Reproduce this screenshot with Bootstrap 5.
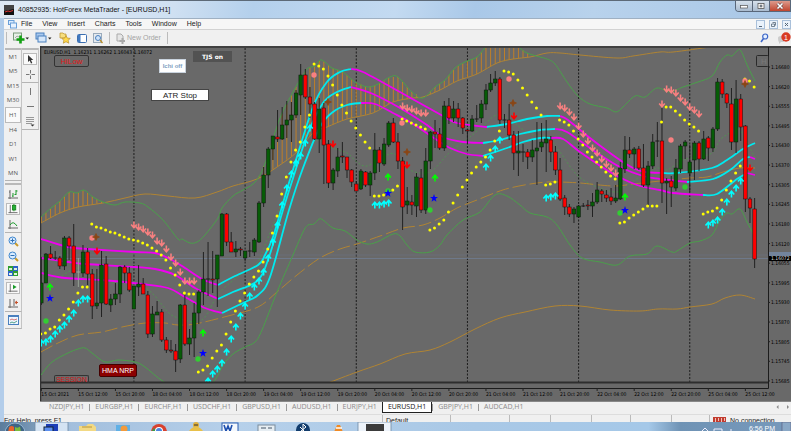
<!DOCTYPE html>
<html lang="en">
<head>
<meta charset="utf-8">
<meta name="viewport" content="width=device-width, initial-scale=1">
<title>40852935: HotForex MetaTrader - [EURUSD,H1]</title>
<link href="https://cdn.jsdelivr.net/npm/bootstrap@5.3.0/dist/css/bootstrap.min.css" rel="stylesheet">
<style>
body{background:#fff;font:7px/10px "Liberation Sans",Arial,sans-serif;color:#222;overflow:hidden}
button{font:inherit;color:inherit;background:none;border:0;padding:0}
svg{display:block}
.app{margin-right:9px}
.titlebar{height:18px;border-top:1px solid #5d6a78;background:linear-gradient(100deg,#dfeaf5 0,#cfe0f2 22%,#b4d0ec 32%,#c3daf1 50%,#a9c8e8 60%,#b8d2ec 75%,#a8c6e6 100%)}
.titlebar .caption{color:#111}
.wbtns{height:11px;border:1px solid #59677a;border-top:0;border-radius:0 0 0 4px;overflow:hidden}
.wbtns button{width:17px;border-right:1px solid #59677a;background:linear-gradient(#d6e1ec,#a9bbcf)}
.wbtns button:last-child{width:20px;border:0;background:linear-gradient(#dd9a8c,#c0452f)}
.frame{border-left:4px solid #b3cdea}
.menubar{height:11px;background:#f6f6f6;border-top:1px solid #9fb0c2}
.menubar a{color:#222;text-decoration:none}
.menus{gap:10px}
.menubar .mdi button{width:9px;height:9px;border:1px solid #a9c0da;background:#eaf2fb}
.toolrow{height:17px;background:#f0f0f0;border-top:1px solid #d2d2d2}
.toolset{gap:6px;padding-left:2px}
.toolrow .order{color:#a3a3a3;gap:2px}
.grip{height:2px;border-top:1px solid #b9b9b9;border-bottom:1px solid #b9b9b9}
.vgrip{width:1px;height:12px;background:#bbb}
.side{background:#f0f0f0;padding:2px 1px 0 1px}
.col-a{width:17px}
.col-b{width:17px}
.tframes{height:130px;color:#555;font-family:"Open Sans",sans-serif;font-size:6px}
.pressed{background:#fafafa;border:1px solid #bbb!important}
.edge{border-right:1px solid #c4c4c4;border-bottom:1px solid #b4b4b4}
.tgroup{padding:2px 0;gap:3px}
.tgroup button{width:14px;height:12px}
.tgroup svg{margin:auto}
.plot button{position:absolute;line-height:1;white-space:nowrap;overflow:hidden}
.b-hilow{left:14px;top:9px;width:35px;height:12px;border:1px solid #333!important;border-radius:2px;color:#e01818!important;font:8px "Liberation Sans",sans-serif!important}
.b-session{left:14px;top:329px;width:35px;height:8px;border:1px solid #333!important;border-bottom:0!important;border-radius:2px 2px 0 0;color:#d01818!important;font:7px "Liberation Sans",sans-serif!important}
.b-ichi{left:119px;top:13px;width:27px;height:14px;background:#fff!important;border:1px solid #c9d3de!important;color:#7f9fc2!important;font:bold 6px "Liberation Sans",sans-serif!important}
.b-tjs{left:153px;top:5px;width:39px;height:11px;background:#525252!important;color:#fff!important;font:bold 6px "DejaVu Sans",sans-serif!important}
.b-atr{left:111px;top:43px;width:58px;height:12px;background:#fff!important;border:1px solid #444!important;color:#222!important;font:8px "Liberation Sans",sans-serif!important}
.b-hma{left:59px;top:318px;width:38px;height:13px;background:#8b0000!important;border:1px solid #400!important;border-radius:2px;color:#fff!important;font:7px "Liberation Sans",sans-serif!important}
.axis{font:5px "DejaVu Sans Condensed","Open Sans",sans-serif;fill:#000}
.tabs{height:13px;background:#f0f0f0;border-top:1px solid #888;padding-left:3px;font-family:"Open Sans",sans-serif}
.tabs a{color:#8a8a8a;text-decoration:none;padding:0 5px 0 6px;line-height:10px;position:relative}
.tabs a+a:not(.on)::before{content:"";position:absolute;left:0;top:2px;height:7px;border-left:1px solid #999}
.tabs a.on{background:#fff;color:#111;border:1px solid #222;border-top:0;padding:0 5px}
.statusbar{height:8px;background:#f0f0f0;border-top:1px solid #ddd;overflow:hidden;line-height:11px}
.statusbar .cell{border-left:1px solid #bbb;height:8px;padding-left:3px;white-space:nowrap}
.taskbar{height:9px;overflow:hidden;background:linear-gradient(90deg,#5b7c9c 0,#6f8fae 3%,#a3bfdd 9%,#b6d0ea 30%,#a9c8e6 60%,#a5c8e8 82%,#6f93b5 86%,#7799bb 100%)}
.taskbar svg{width:100%;height:9px}
.taskbar .clock{color:#fff;line-height:13px}
</style>
</head>
<body>
<div class="app d-flex flex-column">
  <header class="titlebar d-flex justify-content-between">
    <div class="d-flex align-items-center gap-1 ps-1 caption">
      <svg width="10" height="10" viewBox="0 0 10 10"><rect width="10" height="10" fill="#444"/><path d="M0 6L10 4V10H0z" fill="#111"/><path d="M1 7l3-1 2 .5 3-1" stroke="#d33" fill="none"/></svg>
      <span>40852935: HotForex MetaTrader - [EURUSD,H1]</span>
    </div>
    <div class="wbtns d-flex">
      <button aria-label="Minimize"><svg width="16" height="10" viewBox="0 0 16 10"><rect x="4.500" y="4.500" width="7" height="2.500" fill="#fff" stroke="#555" stroke-width=".7"/></svg></button>
      <button aria-label="Restore"><svg width="16" height="10" viewBox="0 0 16 10"><rect x="5" y="2.500" width="6" height="5" fill="#fff" stroke="#555" stroke-width=".8"/><rect x="7" y="4" width="2" height="2" fill="#89a" stroke="#555" stroke-width=".5"/></svg></button>
      <button aria-label="Close"><svg width="20" height="10" viewBox="0 0 20 10"><path d="M7.500 2.500l5 5m0-5l-5 5" stroke="#644" stroke-width="2.800"/><path d="M7.500 2.500l5 5m0-5l-5 5" stroke="#fff" stroke-width="1.600"/></svg></button>
    </div>
  </header>

  <div class="frame">
    <nav class="menubar d-flex align-items-center justify-content-between">
      <div class="d-flex align-items-center">
        <svg class="ms-1 me-1" width="9" height="9" viewBox="0 0 9 9"><rect x=".5" y=".5" width="5.500" height="4" fill="#dcecff" stroke="#6a9fd8"/><rect x="2.500" y="3" width="6" height="5" fill="#e9f3ff" stroke="#6a9fd8"/></svg>
        <div class="menus d-flex"><a href="#">File</a><a href="#">View</a><a href="#">Insert</a><a href="#">Charts</a><a href="#">Tools</a><a href="#">Window</a><a href="#">Help</a></div>
      </div>
      <div class="mdi d-flex gap-1">
        <button aria-label="Minimize chart"><svg width="7" height="7"><path d="M2 5.500h3" stroke="#567"/></svg></button>
        <button aria-label="Restore chart"><svg width="7" height="7"><path d="M2.500 1.500h3v3M1.500 3h3v2.500h-3z" stroke="#567" fill="none" stroke-width=".8"/></svg></button>
        <button aria-label="Close chart"><svg width="7" height="7"><path d="M2 2l3 3m0-3L2 5" stroke="#567"/></svg></button>
      </div>
    </nav>

    <div class="toolrow d-flex align-items-center justify-content-between">
      <div class="toolset d-flex align-items-center">
        <span class="vgrip"></span>
        <button aria-label="New chart"><svg width="16" height="12" viewBox="0 0 16 12"><rect x=".5" y="1" width="8" height="7" fill="#e8f0e8" stroke="#7a9a7a"/><path d="M2 6l2-2 2 1" stroke="#888" fill="none" stroke-width=".7"/><path d="M7.500 3.500v8M3.500 7.500h8" stroke="#12a012" stroke-width="2.600"/><path d="M12.500 5.500h3.500l-1.750 2z" fill="#222"/></svg></button>
        <button aria-label="Profiles"><svg width="18" height="12" viewBox="0 0 18 12"><rect x="1" y="1" width="8" height="6" fill="#a8c8ee" stroke="#4a80be"/><rect x="3" y="4" width="8" height="6" fill="#d4e6fa" stroke="#4a80be"/><path d="M13 5.500h3.500l-1.750 2z" fill="#222"/></svg></button>
        <button aria-label="Market watch"><svg width="12" height="12" viewBox="0 0 12 12"><path d="M1 1h3l1 1h2v4H1z" fill="#f7df7e" stroke="#b98f2a" stroke-width=".7"/><path d="M7 3.500l1.300 2.600 3 .3-2.200 1.900.7 2.900L7 9.700l-2.700 1.500.6-2.900-2.200-2 3-.2z" fill="#ffd84a" stroke="#b98f2a" stroke-width=".7"/></svg></button>
        <button aria-label="Navigator"><svg width="10" height="9" viewBox="0 0 10 9"><rect x=".5" y=".5" width="9" height="8" rx="1" fill="#fff" stroke="#3c6fb0"/><rect x="1" y="1" width="2.500" height="7" fill="#3f78c0"/></svg></button>
        <button aria-label="Strategy tester"><svg width="10" height="11" viewBox="0 0 10 11"><rect x=".5" y=".5" width="8" height="9" fill="#e4e9ee" stroke="#9ab"/><circle cx="5" cy="5" r="2.500" fill="#cfe4fb" stroke="#4a80be"/><path d="M7 7l2.500 3" stroke="#b98f2a" stroke-width="1.400"/></svg></button>
        <span class="vgrip"></span>
        <button class="order d-flex align-items-center" disabled><svg width="9" height="11" viewBox="0 0 9 11"><path d="M1 1h4l2 2v5H1z" fill="#e6e6e6" stroke="#aaa"/><path d="M6.500 5v6M3.500 8h6" stroke="#aaa" stroke-width="2"/></svg><span>New Order</span></button>
        <span class="vgrip"></span>
      </div>
      <div class="d-flex align-items-center gap-2">
        <button aria-label="Search"><svg width="9" height="10" viewBox="0 0 9 10"><circle cx="5.200" cy="3.500" r="2.500" fill="#e4efff" stroke="#3c66c8" stroke-width="1.200"/><path d="M3.500 5.500L1 9" stroke="#3c66c8" stroke-width="1.600"/></svg></button>
        <button aria-label="Notifications"><svg width="14" height="12" viewBox="0 0 14 12"><path d="M1 6q0-2 3-2h3v6H4l-2 2v-2Q1 9 1 6z" fill="#ccc"/><circle cx="9" cy="5" r="4.700" fill="#d83a24"/><text x="9" y="7.500" font-size="7" text-anchor="middle" fill="#fff">1</text></svg></button>
      </div>
    </div>

    <div class="d-flex">
      <aside class="side d-flex align-items-start">
        <div class="col-a">
          <div class="edge">
            <div class="grip"></div>
            <div class="tframes d-flex flex-column">
              <button class="flex-fill">M1</button><button class="flex-fill">M5</button><button class="flex-fill">M15</button><button class="flex-fill">M30</button><button class="flex-fill pressed">H1</button><button class="flex-fill">H4</button><button class="flex-fill">D1</button><button class="flex-fill">W1</button><button class="flex-fill">MN</button>
            </div>
          </div>
          <div class="edge tgroup d-flex flex-column align-items-center">
            <div class="grip w-100"></div>
            <button aria-label="Bar chart"><svg width="10" height="11" viewBox="0 0 10 11"><path d="M2 1v9M0 9h10M2 3H1" stroke="#666"/><path d="M5 4v4M5 7H4M8 1v5M8 2h1.500M8 5.500H6.500" stroke="#1a9a2a"/></svg></button>
            <button aria-label="Candlesticks" class="pressed"><svg width="10" height="10" viewBox="0 0 10 11"><path d="M2 1v9M0 9.500h10" stroke="#666"/><path d="M6 0v8" stroke="#18851f"/><rect x="4.500" y="1.500" width="3.500" height="5" fill="#22b033" stroke="#18851f"/></svg></button>
            <button aria-label="Line chart"><svg width="10" height="11" viewBox="0 0 10 11"><path d="M2 1v9M0 9h10" stroke="#666"/><path d="M2 6q3-5 7 1" stroke="#1a9a2a" fill="none"/></svg></button>
          </div>
          <div class="edge tgroup d-flex flex-column align-items-center">
            <button aria-label="Zoom in"><svg width="11" height="11" viewBox="0 0 11 11"><path d="M6.500 6.500L10 10" stroke="#c99a2a" stroke-width="2"/><circle cx="4.500" cy="4.500" r="3.500" fill="#d9ecff" stroke="#3f86cc"/><path d="M4.500 2.500v4M2.500 4.500h4" stroke="#2d6fb5"/></svg></button>
            <button aria-label="Zoom out"><svg width="11" height="11" viewBox="0 0 11 11"><path d="M6.500 6.500L10 10" stroke="#c99a2a" stroke-width="2"/><circle cx="4.500" cy="4.500" r="3.500" fill="#d9ecff" stroke="#3f86cc"/><path d="M2.500 4.500h4" stroke="#2d6fb5"/></svg></button>
            <button aria-label="Tile windows"><svg width="10" height="10" viewBox="0 0 10 10"><rect width="5" height="5" fill="#2f9e2f"/><rect x="5" width="5" height="5" fill="#2c62c8"/><rect y="5" width="5" height="5" fill="#2c62c8"/><rect x="5" y="5" width="5" height="5" fill="#2f9e2f"/><path d="M1 2h3v2H1zM6 2h3v2H6zM1 7h3v2H1zM6 7h3v2H6z" fill="#dff3df"/></svg></button>
          </div>
          <div class="edge tgroup d-flex flex-column align-items-center">
            <button aria-label="Auto scroll" class="pressed"><svg width="10" height="10" viewBox="0 0 10 11"><path d="M2 1v9M0 9h10" stroke="#666"/><path d="M5 2l4 2.500L5 7z" fill="#1a9a2a"/></svg></button>
            <button aria-label="Chart shift"><svg width="10" height="11" viewBox="0 0 10 11"><path d="M2 1v9M0 9h10M6 1v7" stroke="#666"/><path d="M10 4.500H7.500M9 3L7 4.500 9 6" stroke="#c4502a" fill="none"/></svg></button>
          </div>
          <div class="edge tgroup d-flex flex-column align-items-center">
            <button aria-label="Templates"><svg width="11" height="10" viewBox="0 0 11 10"><rect x=".5" y=".5" width="10" height="9" fill="#eef6ff" stroke="#4a80be"/><path d="M1 1.500h9" stroke="#4a80be"/><path d="M2 5l2-1 2 1 3-1" stroke="#c55" fill="none" stroke-width=".8"/><path d="M2 8l2-1 2 1 3-2" stroke="#2a8a6a" fill="none" stroke-width=".8"/></svg></button>
          </div>
        </div>
        <div class="col-b">
          <div class="edge tgroup d-flex flex-column align-items-center pt-0">
            <div class="grip w-100"></div>
            <button aria-label="Cursor" class="pressed"><svg width="7" height="9" viewBox="0 0 7 9"><path d="M1 0v7l1.700-1.500L4 8.500l1.300-.6L4 5h2.300z" fill="#333"/></svg></button>
            <button aria-label="Crosshair"><svg width="9" height="9" viewBox="0 0 9 9"><path d="M4.500 0v3.500M4.500 5.500V9M0 4.500h3.500M5.500 4.500H9" stroke="#777"/></svg></button>
          </div>
          <div class="edge tgroup d-flex flex-column align-items-center">
            <button aria-label="Vertical line"><svg width="9" height="9" viewBox="0 0 9 9"><path d="M4.500 1v7" stroke="#777"/></svg></button>
            <button aria-label="Horizontal line"><svg width="9" height="9" viewBox="0 0 9 9"><path d="M1 4.500h7" stroke="#777"/></svg></button>
            <button aria-label="Fibonacci"><svg width="10" height="11" viewBox="0 0 10 11"><path d="M1 1.500h8M1 3.500h8M1 5.500h8M1 7.500h6" stroke="#999"/><path d="M5.500 8.500h4l-2 2z" fill="#333"/></svg></button>
          </div>
        </div>
      </aside>

      <main class="flex-grow-1" style="min-width:0">
        <div class="plot position-relative">
          <svg id="chart" class="w-100" viewBox="40 46 751 355" role="img" aria-label="EURUSD hourly candlestick chart"></svg>
          <button class="b-hilow">HiLow</button>
          <button class="b-ichi">Ichi off</button>
          <button class="b-tjs">TJS on</button>
          <button class="b-atr">ATR Stop</button>
          <button class="b-hma">HMA NRP</button>
          <button class="b-session">SESSION</button>
        </div>
        <nav class="tabs d-flex justify-content-between">
          <div class="d-flex align-items-start">
            <a href="#">NZDJPY,H1</a><a href="#">EURGBP,H1</a><a href="#">EURCHF,H1</a><a href="#">USDCHF,H1</a><a href="#">GBPUSD,H1</a><a href="#">AUDUSD,H1</a><a href="#">EURJPY,H1</a><a href="#" class="on">EURUSD,H1</a><a href="#">GBPJPY,H1</a><a href="#">AUDCAD,H1</a>
          </div>
          <svg width="18" height="10" viewBox="0 0 18 10"><path d="M5.500 3v4l-2-2zM14 3v4l2-2z" fill="#888"/></svg>
        </nav>
      </main>
    </div>
    <footer class="statusbar d-flex">
      <div class="flex-grow-1">For Help, press F1</div>
      <div class="cell" style="width:68px">Default</div><div class="cell" style="width:59px"></div><div class="cell" style="width:41px"></div><div class="cell" style="width:41px"></div><div class="cell" style="width:39px"></div><div class="cell" style="width:41px"></div><div class="cell" style="width:38px"></div>
      <div class="cell d-flex" style="width:82px"><svg class="me-1" width="13" height="8"><rect y="2" width="13" height="6" fill="#c23b2e"/><path d="M2.500 3v5M5.500 3v3M8.500 3v5M11.500 3v3" stroke="#f0c0b8"/></svg><span>No connection</span></div>
    </footer>
  </div>

  <div class="taskbar position-relative">
    <svg viewBox="0 0 791 9" preserveAspectRatio="xMinYMin slice">
      <rect x="35" width="33" height="10" fill="#d4e3f3" stroke="#6f8aa6" stroke-width=".8"/>
      <rect x="358" width="33" height="10" fill="#edf3fa" stroke="#6f8aa6" stroke-width=".8"/>
      <circle cx="15" cy="11" r="10" fill="#3f6485" stroke="#9fc0dc" stroke-width=".8"/><path d="M9 5q3-2 5 0v6H8z" fill="#e8642c"/><path d="M15 5q3 1.500 5-.5l1 6h-6z" fill="#7cbc3c"/>
      <rect x="46" y="2" width="12" height="7" fill="#1c3fb8"/><rect x="44" y="5" width="9" height="5" fill="#5c8ff0" stroke="#123"/>
      <path d="M79 4h7l2-2h5l3 3v5H79z" fill="#f2d984"/><path d="M82 5h10" stroke="#b9963a"/>
      <rect x="116" y="3" width="14" height="7" fill="#5fb0e6"/><circle cx="124" cy="7" r="3.500" fill="#f39a3c"/>
      <circle cx="159" cy="10" r="8" fill="#d8412f"/><path d="M151 10l3-4 3 4z" fill="#3a9a4a"/><circle cx="159" cy="9" r="4" fill="#fff"/><circle cx="159" cy="9" r="3" fill="#4a86e0"/>
      <circle cx="196" cy="3" r="3" fill="#e0b03c"/><path d="M189 9q7-9 14 0z" fill="#e8c04a"/><path d="M194 3h4" stroke="#333"/>
      <rect x="222" y="1" width="16" height="9" fill="#f4f8fd" stroke="#2b5cb0"/><path d="M224 3l2 6 2-5 2 5 2-6" stroke="#1f4fae" stroke-width="1.600" fill="none"/>
      <rect x="258" y="3" width="17" height="7" fill="#e6edf2" stroke="#7a8c9c"/><path d="M261 6h5M268 6h4" stroke="#456"/>
      <circle cx="303" cy="8" r="7" fill="#123c6c"/><path d="M300 5l5 5M303 2v8M303 2l3 3-5 4" stroke="#fff" fill="none"/>
      <path d="M337 3h3l3 7h-9z" fill="#f08a24"/><path d="M336 6h6" stroke="#fff" stroke-width="1.500"/>
      <rect x="366" y="2" width="18" height="8" fill="#3b3b3b"/>
      <path d="M702 9l3-3 3 3M714 7h8v3h-8zM731 9v-2" stroke="#eef" fill="none"/>
      <rect x="782" width="9" height="10" fill="#8aa8c6" stroke="#557" stroke-width=".6"/>
    </svg>
    <div class="clock position-absolute top-0 end-0 me-3">6:56 PM</div>
  </div>
</div>

<script src="https://cdn.jsdelivr.net/npm/bootstrap@5.3.0/dist/js/bootstrap.bundle.min.js"></script>
<script>
const STEP = 4.632, X0 = 41.3, X = i => X0 + i * STEP;
let out = '';
const add = s => { out += s; };

// direction, body top, body bottom, wick top, wick bottom
const bars = `g283 303 257 305,g254 283 253 283,r254 258 246 259,d258 258 251 260,r258 266 256 269,g238 266 236 270,r238 246 236 260,r246 273 224 286,w272 272 258 287,g252 273 245 277,r252 274 248 285,r274 306 269 319,g303 306 269 309,g265 303 251 317,r264 304 256 305,g299 305 294 312,g294 299 283 305,g267 294 266 303,r267 273 265 283,r273 290 267 292,g286 309 286 309,g284 287 265 296,r284 294 278 294,r295 334 291 338,g314 334 306 337,g312 315 301 315,r312 340 309 342,r340 350 337 353,r350 351 340 353,r351 360 344 372,g305 359 304 363,r305 344 295 346,g338 344 329 355,g313 338 303 357,g292 313 290 324,g279 292 252 305,d279 279 242 296,r279 280 251 293,g255 279 255 307,g214 256 213 256,r214 242 213 246,r242 252 232 252,g249 252 241 257,r249 250 247 256,g251 258 251 261,d251 251 242 257,g240 252 238 256,g203 242 201 243,g175 203 167 207,g149 175 147 188,g136 149 136 160,r137 139 110 142,g125 139 107 140,g120 125 101 138,g115 120 102 142,g93 115 90 118,g75 95 64 115,r75 97 69 99,r97 104 87 118,r104 139 102 140,g109 139 98 153,r108 145 103 184,r144 183 140 188,g170 183 168 190,g157 171 148 177,r156 157 142 163,r157 170 157 178,r170 182 169 187,r184 191 181 191,g171 189 169 190,r172 185 171 187,g173 185 171 196,g150 173 133 180,r150 163 147 172,g144 164 138 166,g123 145 121 147,r123 142 118 143,r142 161 133 169,r161 207 157 230,g201 205 187 214,r202 205 195 215,g177 206 173 217,r178 210 169 213,g161 210 148 214,g132 161 131 169,r132 134 120 148,r134 148 128 150,g106 148 101 151,r106 118 98 124,g109 118 101 122,r109 118 103 127,r118 128 117 134,r130 131 129 144,g119 131 115 132,d119 119 105 122,g104 118 100 123,g90 104 84 110,g83 90 74 92,g79 83 71 86,r79 120 77 124,d120 120 114 128,r120 135 104 140,r135 153 131 170,g151 153 131 176,d152 152 144 162,r152 157 149 169,g150 157 140 162,g148 151 122 185,g142 147 123 152,g139 143 120 172,r140 152 136 162,r152 170 146 175,r170 199 158 201,r198 207 195 215,r207 214 204 217,g209 214 207 223,g206 217 205 218,d206 206 203 207,r205 206 200 210,g202 206 193 217,g190 202 182 204,r191 194 189 202,r195 198 190 202,r197 201 188 205,g198 201 185 203,g168 199 162 200,g150 169 136 173,r150 154 137 158,g149 154 147 169,r149 168 146 170,r168 185 144 187,g166 185 161 205,g142 166 134 169,d141 141 122 157,r141 183 108 203,g181 183 178 214,r181 187 176 207,g168 188 159 191,g146 169 144 173,g142 146 140 159,g162 173 145 192,g143 160 141 180,r143 159 141 171,g139 159 131 160,r138 148 136 161,g129 148 127 152,g82 129 78 131,r82 94 79 98,r94 103 93 108,r104 142 88 150,g99 142 80 153,r99 127 94 141,r126 199 125 212,r199 208 197 223,r209 259 198 268`.split(',');

const P = s => s.trim().split(/\s+/).map(p => p.split(',').map(Number));
const greenTop = P('41,217 51,208 60,201 69,192 77,193 84,190 93,197 103,202 115,205 125,202 140,203 148,207 163,220 178,239 182,239 190,243 197,242 205,235 218,218 222,208 233,196 243,190 253,184 260,175 267,158 280,118 293,92 303,75 308,68 315,66 320,60 325,62 332,68 343,72 355,82 368,87 378,84 390,77 398,77 412,92 423,98 435,87 445,80 455,68 465,62 477,57 485,48 497,38 510,38 520,48 527,53 540,57 547,59 555,64 567,82 578,96 590,104 607,108 616,112 623,107 635,96 645,97 657,88 670,92 683,87 698,82 712,76 720,62 727,55 732,56 737,51 741,51 748,67 755,81');
const goldTop = P('41,223 60,213 78,207 103,203 125,198 145,194 168,196 195,198 217,192 233,186 257,179 277,167 297,152 313,133 327,127 347,119 373,113 393,102 413,98 423,97 440,90 457,81 477,74 497,63 513,59 530,57 547,53 560,53 580,55 617,58 633,56 660,52 673,52 710,47');
const greenMid = P('41,288 55,280 72,270 85,268 102,277 115,283 135,283 152,293 168,312 178,318 195,322 205,317 213,303 222,290 240,275 257,263 267,240 277,215 293,173 303,153 317,140 330,147 347,153 357,162 367,166 383,157 395,154 407,168 420,173 433,170 450,152 470,137 487,122 497,115 510,120 530,134 547,137 560,152 577,175 597,187 617,192 627,185 647,173 657,168 667,170 683,160 697,157 712,153 720,140 730,133 740,130 755,158');
const goldMid = P('41,352 58,343 78,335 102,332 122,327 145,323 165,323 178,325 195,324 228,316 258,307 277,292 297,275 320,258 340,249 357,244 383,235 403,228 423,225 440,218 457,208 477,200 497,192 510,188 530,184 547,182 560,182 580,183 613,186 633,184 660,181 690,178 707,177 723,172 740,168 755,168');
const greenLow = P('41,375 52,362 68,353 78,349 85,348 92,353 105,362 118,360 135,362 145,367 164,382 190,395 213,382 223,365 233,354 245,347 255,342 262,330 277,292 293,255 303,232 308,225 314,224 319,219 323,220 333,228 345,231 357,240 367,244 377,242 393,234 400,236 407,245 415,252 430,252 440,245 447,235 463,220 480,212 495,195 507,196 520,205 530,213 547,217 557,225 570,245 582,258 600,262 617,265 630,256 647,254 657,246 672,252 677,251 690,243 700,241 712,235 720,220 727,213 732,214 740,209 747,222 755,237');
const goldLow = P('328,383 357,372 380,364 405,354 430,350 450,342 475,329 500,318 525,312 555,306 580,306 610,310 640,311 658,309 677,309 690,307 712,304 725,298 740,295 755,299');

// Catmull-Rom spline through the points
function curve(p, color, w, extra = '') {
  let d = `M${p[0]}`;
  for (let i = 0; i < p.length - 1; i++) {
    const a = p[i - 1] || p[i], b = p[i], c = p[i + 1], e = p[i + 2] || c;
    d += `C${b[0] + (c[0] - a[0]) / 6} ${b[1] + (c[1] - a[1]) / 6} ${c[0] - (e[0] - b[0]) / 6} ${c[1] - (e[1] - b[1]) / 6} ${c}`;
  }
  add(`<path d="${d}" fill="none" stroke="${color}" stroke-width="${w}" ${extra}/>`);
}
function at(p, x) {
  for (let i = 1; i < p.length; i++) if (x <= p[i][0]) {
    const [a, b] = p[i - 1], [c, d] = p[i];
    return b + (d - b) * (x - a) / (c - a);
  }
  return p[p.length - 1][1];
}

add('<defs><clipPath id="area"><rect x="41" y="48" width="727" height="334"/></clipPath></defs>');
add('<rect x="40" y="46" width="751" height="355" fill="#696969"/><path d="M40 47H791M40.5 46V401" stroke="#333" stroke-width="1.500"/>');
add('<g clip-path="url(#area)">');
for (const k of [20, 44, 68, 92, 116, 140]) add(`<path d="M${X(k)} 48V388" stroke="#1c1c1c" stroke-dasharray="2 1.500"/>`);
add('<path d="M41 258.500H768" stroke="#71819a" stroke-width=".7"/><path d="M41 255H768" stroke="#6c7484" stroke-width=".6"/>');
for (let i = 0; i < 106; i++) {
  const x = X(i), g = at(greenTop, x), y = at(goldTop, x);
  if (y - g > 1) add(`<path d="M${x} ${g}V${y}" stroke="#c07f28" stroke-width="1"/>`);
}
curve(goldTop, '#b08433', 1); curve(greenTop, '#4aa04a', 1);
curve(greenMid, '#4c9a4c', .8, 'stroke-dasharray="2 2"');
curve(goldMid, '#b08433', 1, 'stroke-dasharray="13 4"');
curve(greenLow, '#4aa04a', 1); curve(goldLow, '#b08433', 1);

const M = '#f000f0', C = '#00eaf0';
[[M, '41,239 68,247 88,249 135,252 155,253 168,258 182,266 202,279 218,285'],
 [C, '218,285 233,277 258,265 265,255 273,237 281,210 292,173 313,107 327,82 340,72 351,69'],
 [M, '351,69 363,72 400,92 443,116 457,123 487,127'],
 [C, '487,127 507,124 527,119 547,116 560,116'],
 [M, '560,116 568,120 590,138 617,158 633,168 645,172 663,173'],
 [C, '663,173 677,173 712,168 727,160 743,149 755,143'],
 [M, '41,258 68,262 85,264 135,267 155,269 175,275 195,288 218,299'],
 [C, '218,299 233,292 257,281 268,260 283,210 295,172 308,133 323,103 337,92 351,87'],
 [M, '351,87 373,94 400,108 427,125 443,137 463,142 483,143'],
 [C, '483,143 500,140 520,134 540,130 555,129'],
 [M, '555,129 567,132 597,153 620,167 643,176 660,179 687,182'],
 [C, '687,182 713,179 730,170 743,159 750,157'], [M, '750,157 755,159'],
 [M, '41,273 65,278 102,280 142,284 168,288 185,297 205,308 222,313'],
 [C, '222,313 245,302 258,295 270,277 289,210 303,168 320,127 333,112 347,105 361,103'],
 [M, '361,103 375,104 393,113 410,122 437,140 450,148 467,154 483,156'],
 [C, '483,156 507,148 523,142 540,138 551,138'],
 [M, '551,138 563,139 580,152 610,172 637,185 660,190 673,193 703,195'],
 [C, '703,195 717,194 737,179 747,173'], [M, '747,173 755,175']
].forEach(([c, s]) => curve(P(s), c, 1.8));

bars.forEach((b, i) => {
  const k = b[0], [t, u, h, l] = b.slice(1).split(' ').map(Number), x = X(i);
  const wick = k === 'w' ? '#9aa79a' : '#1a1a1a';
  add(`<path d="M${x} ${h}V${l}" stroke="${wick}" stroke-width=".9"/>`);
  if (k === 'g' || k === 'r') add(`<rect x="${x - 1.8}" y="${t}" width="3.600" height="${Math.max(1, u - t)}" fill="${k === 'g' ? '#065c06' : '#ff0000'}" stroke="#111" stroke-width=".5"/>`);
  else add(`<path d="M${x - 2} ${t}h4" stroke="${wick}"/>`);
});

const run = (start, s, f) => s.split(' ').forEach((y, n) => f(X(start + n), +y));
const dot = (x, y) => add(`<circle cx="${x - .5}" cy="${y}" r="1.500" fill="#ff0"/>`);
run(0, '334 333 329 327 320 315 309 302 293 287 287', dot);
run(11, '224 227 228 230 232 233 235 237 239 240 241 243 245 248 251 255 260 268 275 285 293 294 294', dot);
run(34, '372 370 366 358 351 345 334 322 311 301 293 284 277 271 262 249 233 216 194 177 162 150 142 127 115', dot);
run(59, '64 66 69 76 85 95 105 113 121 128 135 142 148', dot);
run(72, '196 196 195 192 190 186', dot);
run(78, '119 121 123 125 127 129', dot);
run(84, '230 228 224 220 212 203 195 187 180 173 167 162 157 150 141 131', dot);
run(100, '71 72 74 80 88 95 102 108 115', dot);
run(109, '185 184 182', dot);
run(112, '120 122 125 131 139 145 152 157 162 167 172 176 179', dot);
run(125, '223 222 218 215 212 209 206 206 206 122', dot);
run(135, '107 107 111 115 120 124 127 131', dot);
run(143, '214 212 211 208 200 190 181 173 166', dot);
run(152, '79 81 87', dot);

const arrow = (c, dir) => (x, y) => add(`<path d="M${x} ${y + 3.5 * dir}V${y - 3 * dir}M${x - 2.8} ${y + .6 * dir}L${x} ${y - 2.8 * dir}L${x + 2.8} ${y + .6 * dir}" fill="none" stroke="${c}" stroke-width="1.600"/>`);
const up = arrow('#00ffff', 1), pink = arrow('#f88080', -1), red = arrow('#ff0000', -1), lime = arrow('#00ff00', 1);
run(0, '343 342 339 334 329 325 319 313 303 299 299', up);
run(36, '381 374 369 363 352 339 327 316 306 296 287 281 272 258 242 225 205 188 174 163 156 143 128', up);
run(72, '205 205 204 203', up);
run(96, '167 158 149 140', up);
run(109, '198 197 196', up);
run(144, '225 223 220 212 202 194 188 181', up);
run(20, '225 227 229 232 235 241 243 249 257 263 272 281 281 281', pink);
run(78, '106 108 109 111 113 113', pink);
run(112, '106 108 112 117 126 134 141 148 153 159 164 168 173', pink);
run(134, '104 89 90 93 98 102 107 110 114', pink);

P('46,321 198,359 388,191 430,210 620,213 685,187').forEach(([x, y]) => add(`<circle cx="${x}" cy="${y}" r="2.700" fill="#32cd32"/>`));
P('92,238 314,75 402,123 509,79 671,140 745,81').forEach(([x, y]) => add(`<circle cx="${x}" cy="${y}" r="2.700" fill="#f88080"/>`));
P('96,237 328,102 407,152 513,103 745,84').forEach(([x, y]) => add(`<path d="M${x} ${y - 3.5}l1 2.500 2.500 1-2.500 1-1 2.500-1-2.500-2.500-1 2.500-1z" fill="#8b4513" stroke="#8b4513" stroke-width=".7"/>`));
P('97,251 333,144 407,165 514,116 750,168').forEach(([x, y]) => red(x, y));
P('50,287 203,333 388,177 435,178 625,197').forEach(([x, y]) => lime(x, y));
P('50,298 203,353 388,193 434,198 625,210').forEach(([x, y]) => add(`<path d="M${x} ${y - 4}l1 2.900h3l-2.400 1.900.9 3-2.500-1.800-2.500 1.800.9-3-2.400-1.900h3z" fill="#00f"/>`));
add('</g>');

add('<path d="M41 382.500H768" stroke="#2e2e2e" stroke-width="2"/><path d="M41 388.500H768.500V47" stroke="#1c1c1c" fill="none"/>');
add('<rect x="756.500" y="55.500" width="12" height="11" rx="1" fill="none" stroke="#2a2a2a"/><text x="761" y="64" font-size="8" fill="#7a7a7a">H</text>');
add('<g class="axis"><text x="44" y="54">EURUSD,H1&#160; 1.16231 1.16262 1.16043 1.16072</text>');
'1.16680 1.16620 1.16555 1.16495 1.16430 1.16370 1.16305 1.16245 1.16180 1.16120 1.16055 1.15995 1.15930 1.15870 1.15805 1.15745 1.15685'.split(' ').forEach((t, n) => {
  const y = 67 + n * 19.62;
  add(`<path d="M768 ${y}h2" stroke="#222"/><text x="771" y="${y + 2}">${t}</text>`);
});
const days = ['18', '19', '20', '21', '22'];
const dates = ['15 Oct 2021', '15 Oct 12:00', '15 Oct 20:00'];
days.forEach(d => ['04:00', '12:00', '20:00'].forEach(h => dates.push(`${d} Oct ${h}`)));
dates.push('25 Oct 04:00', '25 Oct 12:00');
dates.forEach((t, n) => add(`<path d="M${X(n * 8)} 388v3" stroke="#222"/><text x="${X(n * 8)}" y="396">${t}</text>`));
add('<rect x="769" y="252" width="22" height="4" fill="#73849c"/><rect x="769" y="256" width="22" height="5" fill="#000"/><text x="771" y="260" style="fill:#ddd">1.16072</text></g>');
document.getElementById('chart').innerHTML = out;
</script>
</body>
</html>
